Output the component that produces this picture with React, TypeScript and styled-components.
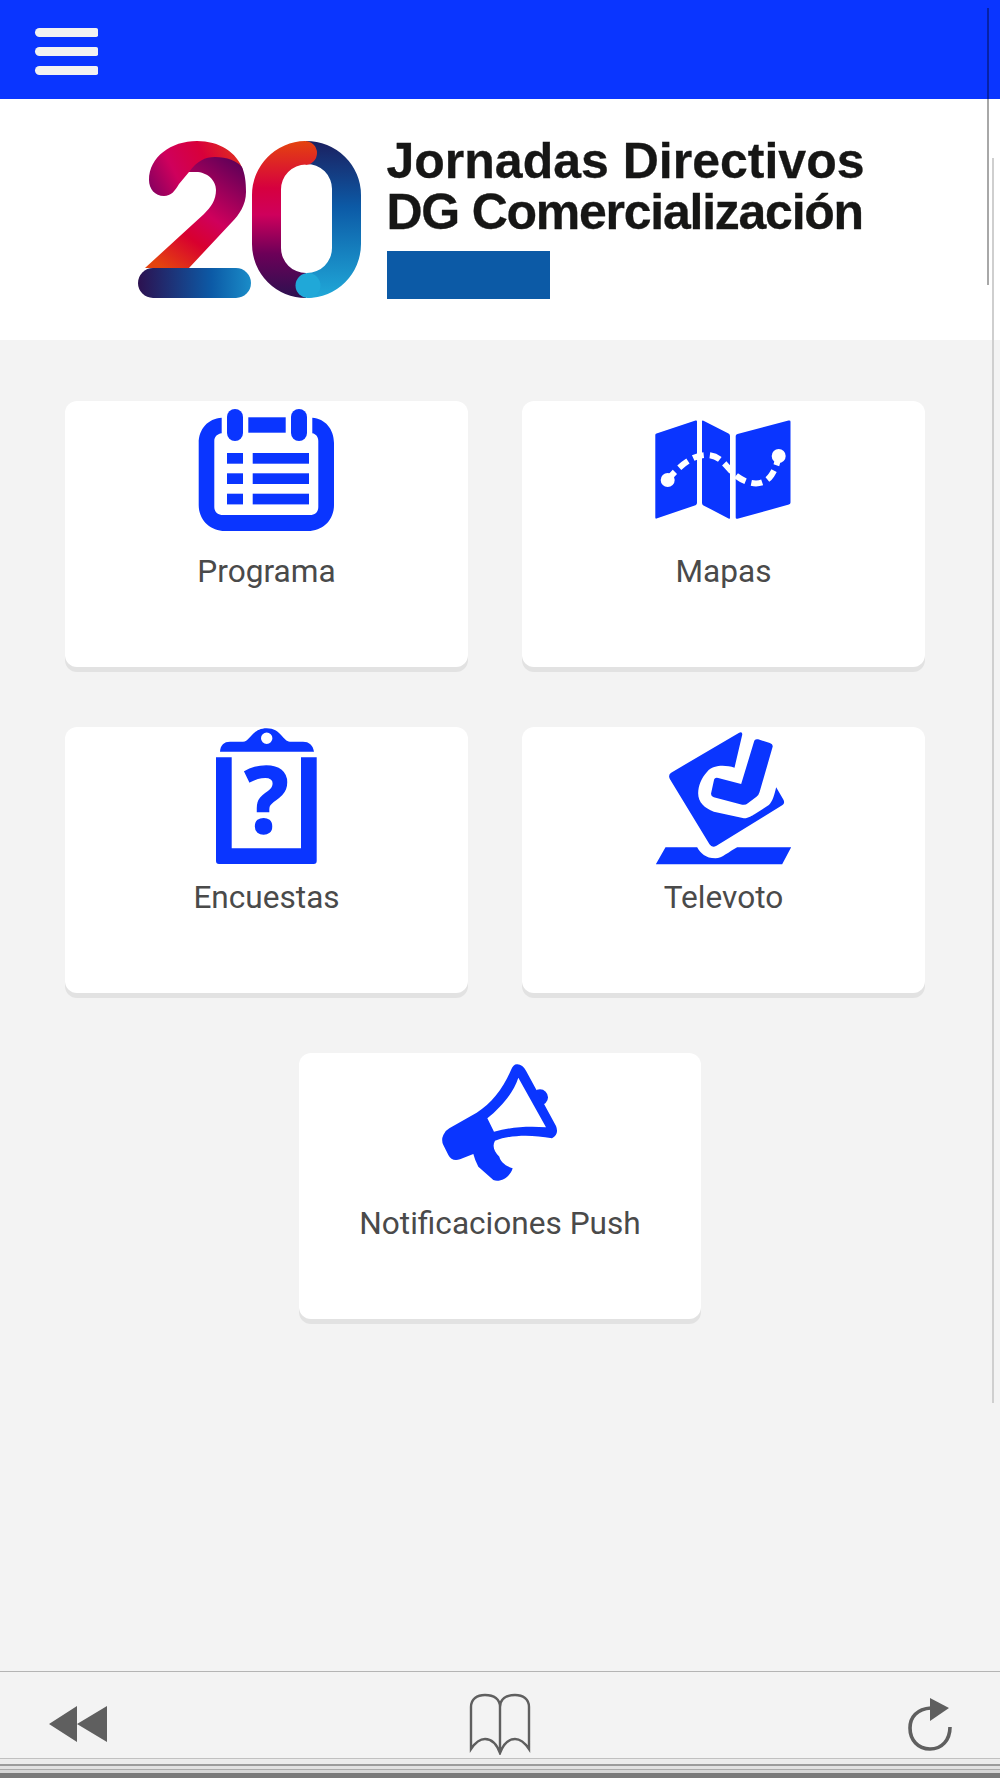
import styled, { createGlobalStyle } from 'styled-components';

const BLUE = '#0a35ff';
const LABEL = '#4a4a4a';
const BAR_ICON = '#5f5f5f';

const GlobalStyle = createGlobalStyle`
  html, body {
    margin: 0;
    padding: 0;
    background: #f3f3f3;
  }
  * {
    box-sizing: border-box;
  }
`;

function CalendarIcon() {
  return (
    <Glyph viewBox="0 -4 140 136">
      <path
        fill={BLUE}
        d="M24.7 12.7C11 13.5 1.7 24 1.7 38V100C1.7 115 13 126 28 126H111C126 126 137 115 137 100V38C137 24 128 13.5 115.3 12.7V28.3C119 29 121.3 32 121.3 36V102C121.3 107 118 110 113 110H26C21 110 17.3 107 17.3 102V36C17.3 32 20 29 24.7 28.3Z"
      />
      <rect fill={BLUE} x="30" y="4" width="16" height="32" rx="8" />
      <rect fill={BLUE} x="94" y="4" width="16" height="32" rx="8" />
      <rect fill={BLUE} x="51.3" y="12.3" width="37.4" height="15.4" />
      {[48, 68.3, 88.7].map((y) => (
        <g key={y} fill={BLUE}>
          <rect x="30" y={y} width="16" height="10.7" />
          <rect x="55.7" y={y} width="56.3" height="10.7" />
        </g>
      ))}
    </Glyph>
  );
}

function MapIcon() {
  return (
    <Glyph viewBox="0.5 -4 140 136">
      <path fill={BLUE} d="M1.8 30Q1.8 29 3 28.6L42 15.6Q43.5 15 43.5 16.5V98Q43.5 99.6 42 100.2L3 113.6Q1.8 114 1.8 112.6Z" />
      <path fill={BLUE} d="M48.5 16.5Q48.5 15 50 15.8L75 28.6Q76.5 29.3 76.5 31V113Q76.5 114.3 75 113.4L50 100.4Q48.5 99.6 48.5 98Z" />
      <path fill={BLUE} d="M82.2 31Q82.2 29.6 84 29.1L135 15.6Q137 15 137 16.8V97.6Q137 99 135.4 99.6L84 113.7Q82.2 114.2 82.2 112.4Z" />
      <path
        fill="none"
        stroke="#fff"
        strokeWidth="6"
        strokeDasharray="11 6"
        d="M14 75C25 62 38 50 53 50C68 50 72 62 83 71C95 80 110 82 118 70C122 64 124 58 125 51"
      />
      <circle fill="#fff" cx="14.2" cy="75" r="7" />
      <circle fill="#fff" cx="125.2" cy="51" r="7" />
    </Glyph>
  );
}

function SurveyIcon() {
  return (
    <Glyph viewBox="0 -4 140 136">
      <path fill={BLUE} d="M19 26.3H34.7V117.3H104V26.3H119.7V130Q119.7 133 116.7 133H22Q19 133 19 130Z" />
      <path
        fill={BLUE}
        fillRule="evenodd"
        d="M23 20.7C23.5 14 27 10.7 33 10.7H46C53 10.7 55 -2.7 69.7 -2.7C84 -2.7 86 10.7 93 10.7H106C112 10.7 116 14 117 20.7ZM64 7.3A5.7 5.7 0 0 0 75.4 7.3A5.7 5.7 0 0 0 64 7.3Z"
      />
      <QuestionMark x="69.5" y="102">?</QuestionMark>
    </Glyph>
  );
}

function VoteIcon() {
  return (
    <Glyph viewBox="70.5 36 420 408">
      <path
        fill={BLUE}
        d="M326 53Q337 49 335 60L312 158C285 150 250 148 230 170C212 190 203 212 203 235C203 262 222 280 250 290L340 310C352 311 365 302 372 298L415 270C425 262 432 240 437 217L458 253Q465 265 455 271L258 392Q245 400 237 388L118 192Q112 180 122 173Z"
      />
      <path
        fill={BLUE}
        d="M370 82Q372 70 383 73L418 84Q429 87 426 97L387 232Q385 240 378 245L352 265Q345 271 335 269L250 247Q240 244 242 234L250 197Q252 186 263 189L332 207Z"
      />
      <path fill={BLUE} d="M105 397H200C210 415 225 430 255 430C275 430 295 410 320 397H482L455 448H76Z" />
    </Glyph>
  );
}

function MegaphoneIcon() {
  return (
    <Glyph viewBox="90 39 420 408">
      <circle fill={BLUE} cx="420" cy="172" r="24" />
      <path
        fill={BLUE}
        fillRule="evenodd"
        d="M130 285Q135 272 148 265L230 218C275 190 310 145 333 90Q340 72 352 73Q368 74 378 92L468 258Q478 282 456 295C390 282 330 285 285 302C276 318 282 335 298 350C300 362 315 378 338 385C330 412 300 428 280 420L235 380Q225 362 220 342L180 358Q155 365 145 345L130 315Q123 300 130 285ZM355 113C340 160 300 205 262 235L282 275C330 262 380 258 438 262Z"
      />
    </Glyph>
  );
}

function LogoMark() {
  return (
    <LogoSvg viewBox="139 140 224 160">
      <defs>
        <linearGradient id="zeroLeft" x1="0" y1="141" x2="0" y2="298" gradientUnits="userSpaceOnUse">
          <stop offset="0" stopColor="#e4430f" />
          <stop offset="0.3" stopColor="#d6003f" />
          <stop offset="0.47" stopColor="#cf005c" />
          <stop offset="0.72" stopColor="#6c0058" />
          <stop offset="1" stopColor="#2c1150" />
        </linearGradient>
        <linearGradient id="zeroRight" x1="0" y1="141" x2="0" y2="298" gradientUnits="userSpaceOnUse">
          <stop offset="0" stopColor="#1b2060" />
          <stop offset="0.42" stopColor="#0c5aa6" />
          <stop offset="1" stopColor="#20a8d8" />
        </linearGradient>
        <linearGradient id="twoFront" x1="240" y1="160" x2="165" y2="268" gradientUnits="userSpaceOnUse">
          <stop offset="0" stopColor="#5c0058" />
          <stop offset="0.48" stopColor="#cf005c" />
          <stop offset="0.7" stopColor="#d8002f" />
          <stop offset="1" stopColor="#e4430f" />
        </linearGradient>
        <linearGradient id="twoBack" x1="155" y1="195" x2="240" y2="150" gradientUnits="userSpaceOnUse">
          <stop offset="0" stopColor="#8a0060" />
          <stop offset="0.3" stopColor="#cf005c" />
          <stop offset="0.65" stopColor="#d8003a" />
          <stop offset="1" stopColor="#e03020" />
        </linearGradient>
        <linearGradient id="twoBar" x1="139" y1="0" x2="252" y2="0" gradientUnits="userSpaceOnUse">
          <stop offset="0" stopColor="#2c1150" />
          <stop offset="0.65" stopColor="#0c5aa6" />
          <stop offset="1" stopColor="#1a8cc8" />
        </linearGradient>
      </defs>
      <path
        fill="url(#twoBack)"
        d="M150 180C150 157 172 141 198 141C220 141 238 152 244 170L190 172L180 184C176 191 172 196 165 196C156 196 150 189 150 180Z"
      />
      <path
        fill="url(#twoFront)"
        d="M190 172C198 161 206 157 216 157C228 157 238 161 243 167C246 174 247 182 247 192C247 205 240 215 233 222L190 268H146L205 214C212 207 217 200 217 190C217 180 208 172 197 172Z"
      />
      <rect fill="url(#twoBar)" x="139" y="268" width="113" height="30" rx="15" />
      <path
        fill="url(#zeroRight)"
        d="M307 141A55 54 0 0 1 362 195V244A54 54 0 0 1 308 298V273A25 25 0 0 0 333 248V190A25 25 0 0 0 307 164Z"
      />
      <path
        fill="url(#zeroLeft)"
        d="M306 141A12 12 0 0 1 306 165L307 164.5A25 25 0 0 0 282 190V248A25 25 0 0 0 307 273V298A54 54 0 0 1 253 244V195A54 54 0 0 1 306 141Z"
      />
      <circle fill="#20a8d8" cx="309" cy="285.5" r="12.5" />
    </LogoSvg>
  );
}

const ITEMS = [
  { label: 'Programa', icon: <CalendarIcon /> },
  { label: 'Mapas', icon: <MapIcon /> },
  { label: 'Encuestas', icon: <SurveyIcon /> },
  { label: 'Televoto', icon: <VoteIcon /> },
];

function App() {
  return (
    <Page>
      <GlobalStyle />
      <TopBar>
        <MenuButton>
          <MenuLine />
          <MenuLine />
          <MenuLine />
        </MenuButton>
      </TopBar>
      <LogoPanel>
        <LogoMark />
        <LogoText>
          <LogoTitle>Jornadas Directivos</LogoTitle>
          <LogoTitle $tight>DG Comercialización</LogoTitle>
          <LogoBlock />
        </LogoText>
      </LogoPanel>
      <Content>
        <CardGrid>
          {ITEMS.map(({ label, icon }) => (
            <Card key={label}>
              {icon}
              <CardLabel>{label}</CardLabel>
            </Card>
          ))}
        </CardGrid>
        <LastRow>
          <LastCard>
            <MegaphoneIcon />
            <CardLabel>Notificaciones Push</CardLabel>
          </LastCard>
        </LastRow>
      </Content>
      <BottomBar>
        <BarIcon width="60" height="38" viewBox="0 0 60 40" preserveAspectRatio="none">
          <path fill={BAR_ICON} d="M1 20L29 1V39ZM29 20L59 1V39Z" />
        </BarIcon>
        <BarIcon $middle width="62" height="62" viewBox="0 0 62 62">
          <path
            fill="none"
            stroke={BAR_ICON}
            strokeWidth="2.4"
            d="M31 14C31 6 25 2 16 2C8 2 2 6 2 14V56C6 50 10 46 16 46C23 46 28 52 31 60C34 52 39 46 46 46C52 46 56 50 60 56V14C60 6 54 2 46 2C37 2 31 6 31 14V60"
          />
        </BarIcon>
        <BarIcon $end width="44" height="54" viewBox="1 0 44 54">
          <path fill="none" stroke={BAR_ICON} strokeWidth="3.6" d="M43 30C43 43 35 52 23 52C11 52 3 43 3 31C3 20 10 12 24 11" />
          <path fill={BAR_ICON} d="M23 1L42 11L23 24Z" />
        </BarIcon>
      </BottomBar>
      <BottomEdge />
      <ScrollLine />
      <ScrollTrack />
    </Page>
  );
}

const Page = styled.div`
  position: relative;
  display: flex;
  flex-direction: column;
  width: 1000px;
  height: 1778px;
  overflow: hidden;
  background: #f3f3f3;
  font-family: Roboto, 'Liberation Sans', sans-serif;
`;

const TopBar = styled.header`
  flex: none;
  display: flex;
  align-items: center;
  height: 99px;
  padding: 4px 0 0 35px;
  background: ${BLUE};
`;

const MenuButton = styled.div`
  display: flex;
  flex-direction: column;
  gap: 9.5px;
  width: 63px;
`;

const MenuLine = styled.span`
  display: block;
  height: 9.5px;
  background: #f2f2f2;
  border-radius: 5px 2px 2px 5px;
`;

const LogoPanel = styled.section`
  flex: none;
  display: flex;
  justify-content: center;
  align-items: flex-start;
  gap: 25px;
  height: 241px;
  padding: 41px 0 0 2px;
  background: #fff;
`;

const LogoSvg = styled.svg`
  display: block;
  width: 224px;
  height: 160px;
`;

const LogoText = styled.div`
  display: flex;
  flex-direction: column;
  margin-top: -4px;
`;

const LogoTitle = styled.div<{ $tight?: boolean }>`
  font-family: 'Liberation Sans', Arial, sans-serif;
  font-weight: 700;
  font-size: 50px;
  line-height: 51px;
  letter-spacing: ${({ $tight }) => ($tight ? '-1.25px' : '0')};
  -webkit-text-stroke: 0.3px #161615;
  color: #161615;
  white-space: nowrap;
`;

const LogoBlock = styled.div`
  width: 163px;
  height: 48px;
  margin-top: 13px;
  background: #0c5aa6;
`;

const Content = styled.main`
  flex: 1;
  padding: 61px 0 0 65px;
`;

const CardGrid = styled.div`
  display: grid;
  grid-template-columns: 404px 404px;
  column-gap: 53px;
  row-gap: 60px;
`;

const LastRow = styled.div`
  display: flex;
  justify-content: center;
  margin: 60px 0 0 -65px;
`;

const Card = styled.div`
  display: flex;
  flex-direction: column;
  align-items: center;
  width: 403px;
  height: 266px;
  background: #fff;
  border-radius: 12px;
  box-shadow: 0 5px 0 #e2e2e2;
`;

const LastCard = styled(Card)`
  width: 402px;
`;

const Glyph = styled.svg`
  display: block;
  flex: none;
  width: 140px;
  height: 136px;
  overflow: visible;
`;

const QuestionMark = styled.text`
  font-family: 'Noto Sans', 'Open Sans', sans-serif;
  font-weight: 700;
  font-size: 92px;
  text-anchor: middle;
  fill: ${BLUE};
  stroke: ${BLUE};
  stroke-width: 1.6px;
`;

const CardLabel = styled.div`
  margin-top: 17px;
  font-size: 31.6px;
  line-height: 36px;
  color: ${LABEL};
  white-space: nowrap;
`;

const BottomBar = styled.footer`
  flex: none;
  display: grid;
  grid-template-columns: 1fr auto 1fr;
  align-items: center;
  height: 88px;
  padding: 18px 48px 0 48px;
  background: #f3f3f3;
  border-top: 1px solid #b4b4b4;
  border-bottom: 1px solid #c0c0c0;
`;

const BarIcon = styled.svg<{ $middle?: boolean; $end?: boolean }>`
  display: block;
  justify-self: ${({ $end, $middle }) => ($end ? 'end' : $middle ? 'center' : 'start')};
`;

const BottomEdge = styled.div`
  flex: none;
  height: 19px;
  background: linear-gradient(
    to bottom,
    #ececec 0,
    #ececec 5px,
    #9c9c9c 5px,
    #9c9c9c 7px,
    #e2e2e2 7px,
    #e2e2e2 10px,
    #ababab 10px,
    #ababab 11px,
    #d6d6d6 11px,
    #d6d6d6 14px,
    #7a7a7a 14px,
    #7a7a7a 19px
  );
`;

const ScrollLine = styled.div`
  position: absolute;
  top: 8px;
  left: 987px;
  width: 2px;
  height: 277px;
  background: rgba(0, 0, 0, 0.34);
`;

const ScrollTrack = styled.div`
  position: absolute;
  top: 158px;
  left: 992px;
  width: 2px;
  height: 1245px;
  background: #cfcfcf;
`;

export default App;
